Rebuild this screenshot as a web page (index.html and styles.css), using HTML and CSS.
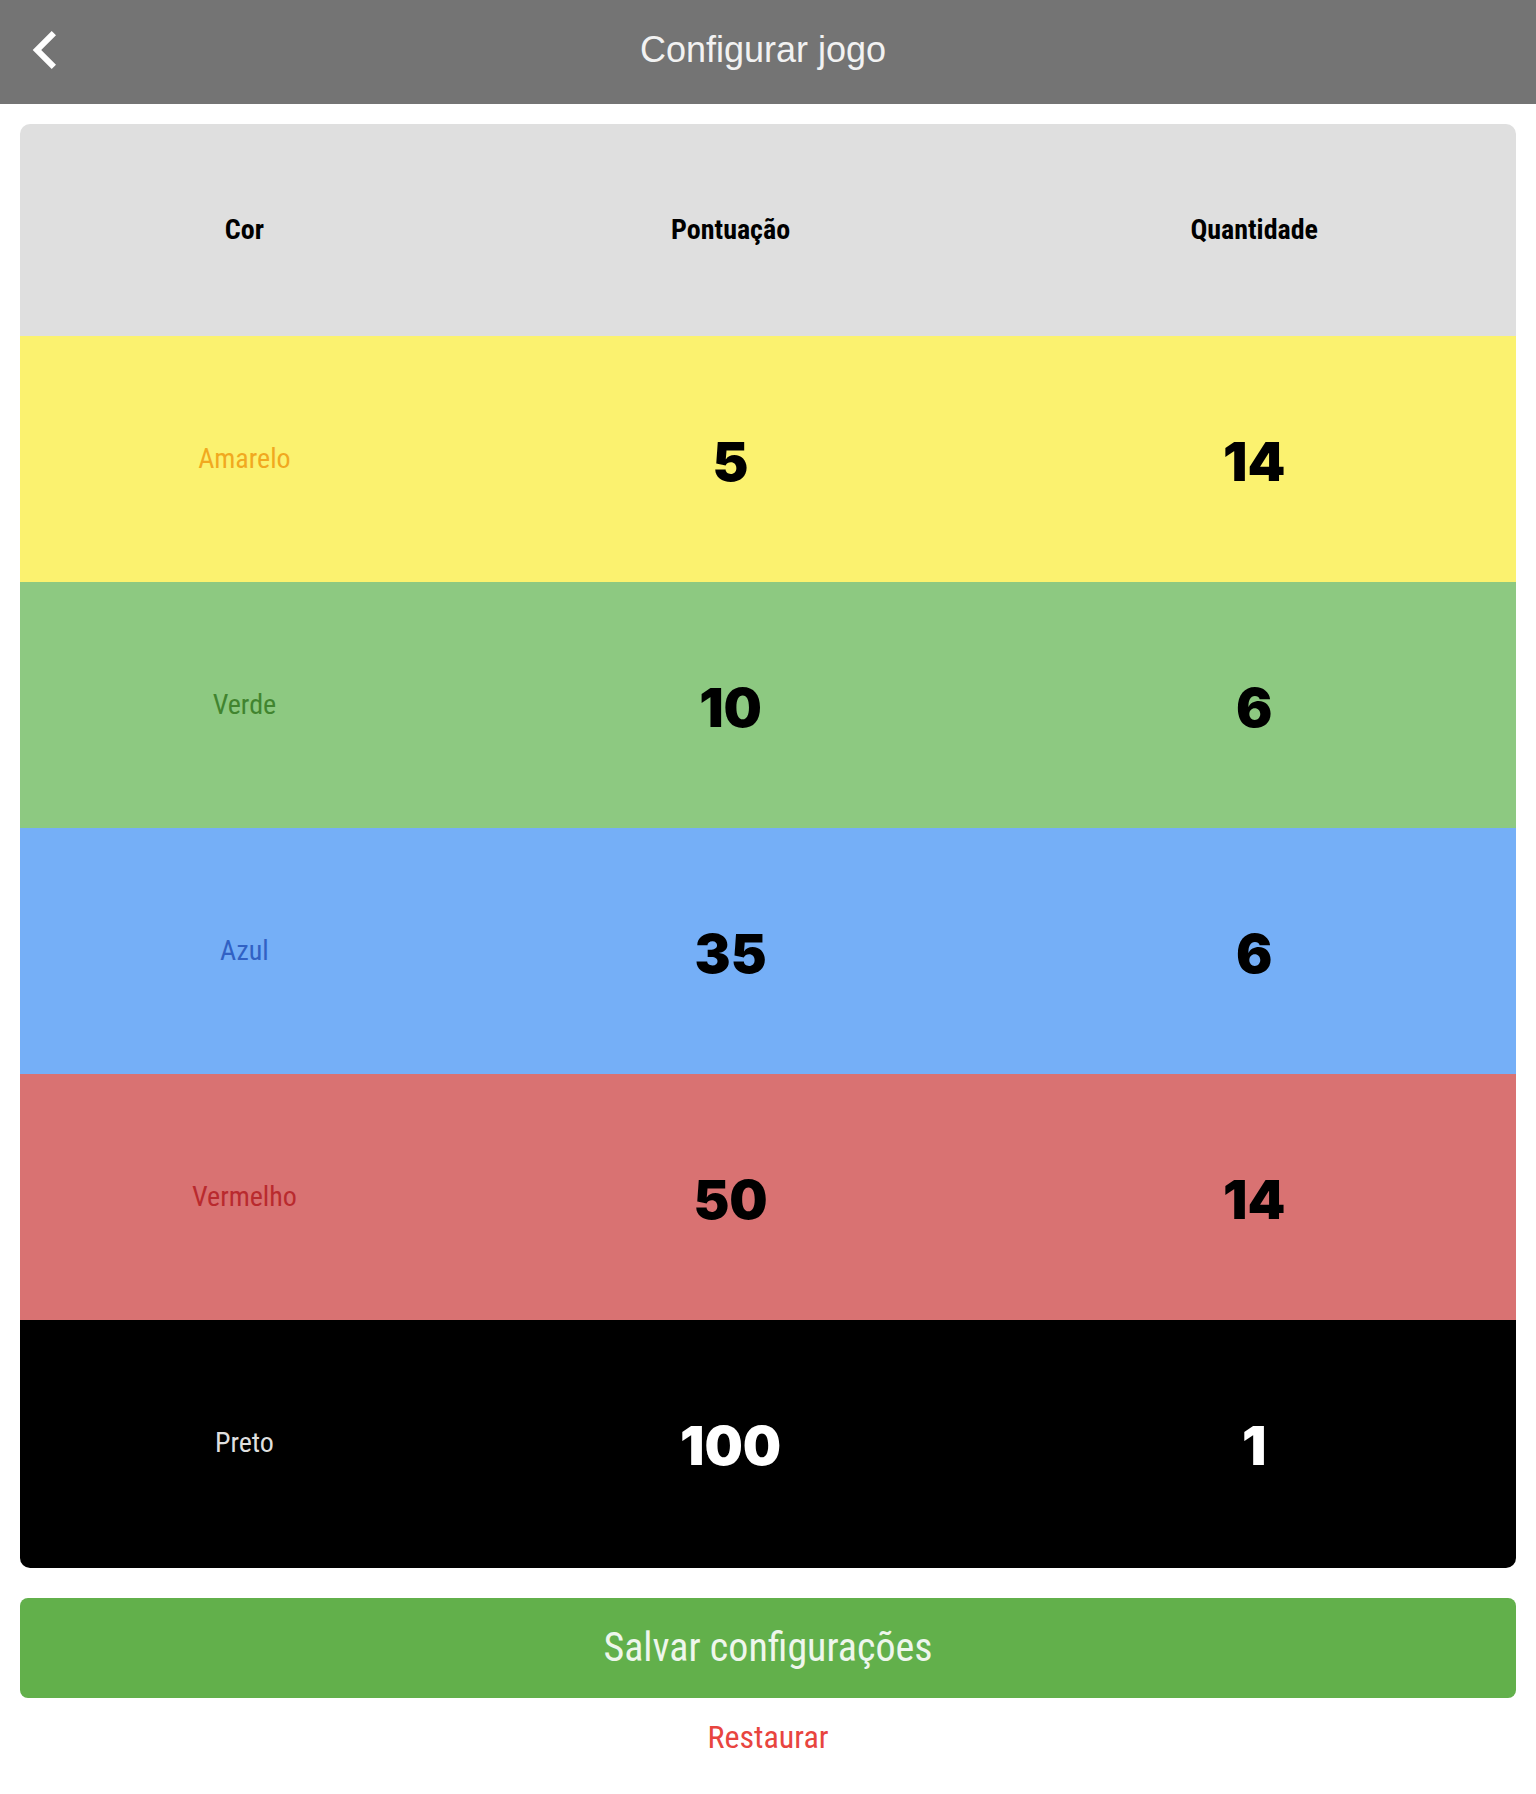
FILE: index.html
```html
<!DOCTYPE html>
<html lang="pt-BR">
<head>
<meta charset="utf-8">
<meta name="viewport" content="width=device-width, initial-scale=1">
<title>Configurar jogo</title>
<link rel="stylesheet" href="styles.css">
</head>
<body>
<header class="topbar">
  <button class="back" type="button" aria-label="Voltar">
    <svg class="back-icon" viewBox="0 0 24 38" aria-hidden="true"><path d="M19.700 0 .7 19l19 19 4.300-4.300L9.200 19 24 4.300z" fill="currentColor"/></svg>
  </button>
  <h1 class="title">Configurar jogo</h1>
</header>
<main class="content">
  <form class="settings">
    <table class="balls">
      <colgroup><col class="col-color"><col class="col-points"><col class="col-amount"></colgroup>
      <thead>
        <tr><th scope="col">Cor</th><th scope="col">Pontuação</th><th scope="col">Quantidade</th></tr>
      </thead>
      <tbody>
        <tr class="yellow"><th scope="row">Amarelo</th><td><input class="number" type="text" inputmode="numeric" aria-label="Pontuação da bola amarela" value="5"></td><td><input class="number" type="text" inputmode="numeric" aria-label="Quantidade de bolas amarelas" value="14"></td></tr>
        <tr class="green"><th scope="row">Verde</th><td><input class="number" type="text" inputmode="numeric" aria-label="Pontuação da bola verde" value="10"></td><td><input class="number" type="text" inputmode="numeric" aria-label="Quantidade de bolas verdes" value="6"></td></tr>
        <tr class="blue"><th scope="row">Azul</th><td><input class="number" type="text" inputmode="numeric" aria-label="Pontuação da bola azul" value="35"></td><td><input class="number" type="text" inputmode="numeric" aria-label="Quantidade de bolas azuis" value="6"></td></tr>
        <tr class="red"><th scope="row">Vermelho</th><td><input class="number" type="text" inputmode="numeric" aria-label="Pontuação da bola vermelha" value="50"></td><td><input class="number" type="text" inputmode="numeric" aria-label="Quantidade de bolas vermelhas" value="14"></td></tr>
        <tr class="black"><th scope="row">Preto</th><td><input class="number" type="text" inputmode="numeric" aria-label="Pontuação da bola preta" value="100"></td><td><input class="number" type="text" inputmode="numeric" aria-label="Quantidade de bolas pretas" value="1"></td></tr>
      </tbody>
    </table>
    <button class="save" type="submit">Salvar configurações</button>
    <button class="reset" type="reset">Restaurar</button>
  </form>
</main>
</body>
</html>
```
FILE: styles.css
```css
* {
  box-sizing: border-box;
}

body {
  margin: 0;
  background: #fff;
  color: #000;
  font-family: "Liberation Sans Narrow", "Roboto Condensed", "Open Sans Condensed", "Liberation Sans", sans-serif;
}

button,
input {
  border: 0;
  padding: 0;
  background: none;
  color: inherit;
  font: inherit;
}

button {
  cursor: pointer;
}

.topbar {
  display: grid;
  grid-template-columns: 90px 1fr 100px;
  align-items: center;
  height: 104px;
  padding-bottom: 4px;
  background: #747474;
  color: #f2f2f2;
}

.back {
  display: flex;
  align-items: center;
  height: 100%;
  padding-left: 32px;
  color: #fff;
}

.back-icon {
  width: 24px;
  height: 38px;
}

.title {
  margin: 0;
  font: 400 36px/40px "Liberation Sans", Arial, sans-serif;
  text-align: center;
}

.content {
  padding: 20px;
}

.settings {
  display: flex;
  flex-direction: column;
}

.balls {
  width: 100%;
  table-layout: fixed;
  border-collapse: collapse;
  border-radius: 10px;
  overflow: hidden;
  font-size: 28px;
  line-height: 32px;
  text-align: center;
}

.col-color {
  width: 30%;
}

.col-points,
.col-amount {
  width: 35%;
}

.balls th,
.balls td {
  height: 246px;
  padding: 0;
  font-weight: 400;
}

.balls thead th {
  height: 212px;
  background: #dfdfdf;
  font-weight: 700;
}

.balls tbody tr:last-child > * {
  height: 248px;
  padding-bottom: 2px;
}

.number {
  width: 100%;
  height: 76px;
  padding-top: 4px;
  font: 900 54px/72px Inter, Roboto, sans-serif;
  text-align: center;
}

.yellow {
  background: #fbf26f;
}

.yellow th {
  color: #f1a91f;
}

.green {
  background: #8dc981;
}

.green th {
  color: #41842f;
}

.blue {
  background: #75aff7;
}

.blue th {
  color: #3161c4;
}

.red {
  background: #d97272;
}

.red th {
  color: #b92a2e;
}

.black {
  background: #000;
  color: #fff;
}

.black th {
  color: #dfdfdf;
}

.save {
  height: 100px;
  margin-top: 30px;
  border-radius: 8px;
  background: #62b04b;
  color: #eef6ec;
  font-size: 40px;
  line-height: 48px;
}

.reset {
  align-self: center;
  height: 78px;
  color: #e8453f;
  font-size: 32px;
  line-height: 40px;
}
```
